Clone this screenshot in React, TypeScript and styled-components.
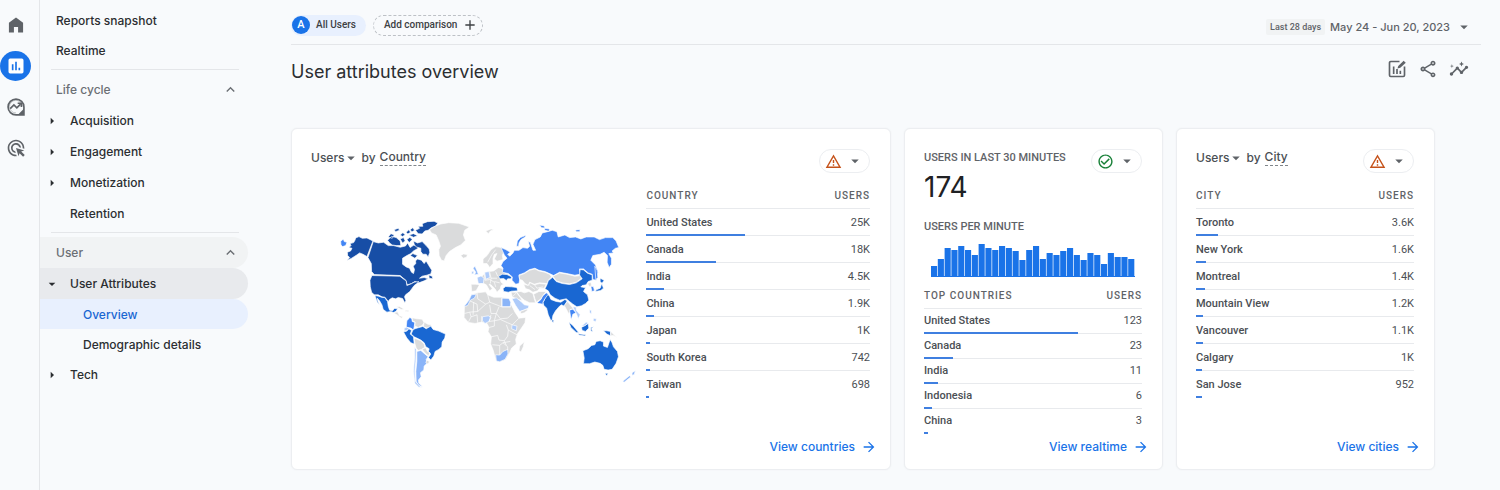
import React from "react";
import styled, { createGlobalStyle } from "styled-components";
import {
  MdAdd,
  MdAdsClick,
  MdArrowDropDown,
  MdArrowForward,
  MdArrowRight,
  MdCheckCircleOutline,
  MdInsights,
  MdKeyboardArrowUp,
  MdOutlineShare,
  MdOutlineWarningAmber,
} from "react-icons/md";

const sans = `Inter, "Liberation Sans", sans-serif`;
const roboto = `Roboto, "Liberation Sans", sans-serif`;

const Global = createGlobalStyle`
  *, *::before, *::after { box-sizing: border-box; }
  body { margin: 0; background: #f8fafc; color: #3c4043; font-family: ${sans}; }
  button, select { font: inherit; color: inherit; background: none; border: 0; padding: 0; margin: 0; cursor: pointer; }
  a { color: inherit; text-decoration: none; }
  h1, h2, p { margin: 0; font-weight: 400; }
  svg { display: block; flex: none; }
`;

/* ---------- shell ---------- */

const Shell = styled.div`
  display: flex;
  min-height: 100vh;
`;

const Rail = styled.nav`
  display: flex;
  flex-direction: column;
  gap: 11px;
  width: 40px;
  flex: none;
  padding-top: 10px;
  border-right: 1px solid #e4e6e9;
`;

const RailLink = styled.a<{ $active?: boolean }>`
  display: grid;
  place-items: center;
  width: 31px;
  height: 30px;
  border-radius: 50%;
  color: ${(p) => (p.$active ? "#fff" : "#5f6368")};
  background: ${(p) => (p.$active ? "#1a73e8" : "transparent")};
`;

const Sidebar = styled.nav`
  width: 208px;
  flex: none;
  padding-top: 5px;
  font-size: 12px;
  font-weight: 500;
`;

const NavDivider = styled.hr`
  height: 1px;
  border: 0;
  margin: 4px 9px 4px 11px;
  background: #e4e6e9;
`;

const NavSection = styled.button<{ $shaded?: boolean }>`
  display: flex;
  align-items: center;
  justify-content: space-between;
  width: 100%;
  height: 31px;
  padding: 0 9px 0 16px;
  border-radius: 0 16px 16px 0;
  color: #6b6f74;
  background: ${(p) => (p.$shaded ? "#f1f3f4" : "transparent")};
`;

const NavGroup = styled.button<{ $open?: boolean }>`
  display: flex;
  align-items: center;
  gap: 10px;
  width: 100%;
  height: 31px;
  padding-left: 4px;
  border-radius: 0 16px 16px 0;
  color: #2b2e31;
  background: ${(p) => (p.$open ? "#e8eaed" : "transparent")};
`;

const NavLeaf = styled.a<{ $level: 0 | 1 | 2; $active?: boolean }>`
  display: flex;
  align-items: center;
  height: 30px;
  padding-left: ${(p) => [16, 30, 43][p.$level]}px;
  border-radius: 0 16px 16px 0;
  color: ${(p) => (p.$active ? "#1967d2" : "#2b2e31")};
  background: ${(p) => (p.$active ? "#e8f0fe" : "transparent")};
`;

const Main = styled.main`
  flex: 1;
  min-width: 0;
  padding: 0 19px 20px 43px;
`;

/* ---------- top bar ---------- */

const TopBar = styled.header`
  display: flex;
  align-items: center;
  justify-content: space-between;
  height: 45px;
  padding-top: 6px;
  border-bottom: 1px solid #e4e6e9;
`;

const Chips = styled.div`
  display: flex;
  gap: 7px;
  font: 500 10px/20px ${roboto};
`;

const UserChip = styled.button`
  display: flex;
  align-items: center;
  gap: 6px;
  height: 21px;
  padding-right: 10px;
  border-radius: 11px;
  background: #e8f0fe;
`;

const Avatar = styled.span`
  width: 18px;
  height: 18px;
  margin-left: 1px;
  border-radius: 50%;
  color: #fff;
  background: #1a73e8;
  font: 500 11px/18px ${roboto};
  text-align: center;
`;

const CompareChip = styled.button`
  display: flex;
  align-items: center;
  gap: 5px;
  height: 21px;
  padding: 0 4px 0 10px;
  border: 1px dashed #bdc1c6;
  border-radius: 11px;
`;

const DateRange = styled.button`
  display: flex;
  align-items: center;
  gap: 5px;
  padding: 3px 8px 0 0;
  color: #5f6368;
  font-size: 11px;
  font-weight: 500;
`;

const DateTag = styled.span`
  padding: 0 4px;
  border-radius: 2px;
  background: #f1f3f4;
  font: 500 9px/16px ${roboto};
`;

const TitleRow = styled.div`
  display: flex;
  align-items: center;
  justify-content: space-between;
  height: 54px;
  padding-right: 12px;
  margin-bottom: 29px;
`;

const Title = styled.h1`
  font-size: 18px;
  line-height: 24px;
  color: #2b2e31;
`;

const Actions = styled.div`
  display: flex;
  gap: 11px;
  padding-bottom: 6px;
  color: #5f6368;
`;

/* ---------- cards ---------- */

const Cards = styled.section`
  display: grid;
  grid-template-columns: 600fr 259fr 259fr;
  gap: 13px;
  padding-right: 46px;
`;

const Card = styled.article`
  display: flex;
  flex-direction: column;
  min-width: 0;
  border: 1px solid #eceef1;
  border-radius: 6px;
  background: #fff;
  box-shadow: 0 0 2px #eef0f2;
`;

const CardHead = styled.header`
  display: flex;
  align-items: flex-start;
  justify-content: space-between;
  height: 42px;
  padding: 20px 20px 0 19px;
`;

const CardTitle = styled.h2`
  display: flex;
  gap: 4px;
  font-size: 12px;
  line-height: 18px;
  font-weight: 500;
  color: #4b4f54;
`;

const Metric = styled.label`
  display: flex;
  align-items: center;
`;

const MetricSelect = styled.select`
  appearance: none;
  field-sizing: content;
  outline: 0;
`;

const Dimension = styled.button`
  height: 17px;
  border-bottom: 1px dashed #80868b;
  line-height: 16px;
`;

const StatusButton = styled.button<{ $tone: "warning" | "good" }>`
  display: flex;
  align-items: center;
  justify-content: space-between;
  width: 51px;
  height: 24px;
  padding: 0 5px;
  border: 1px solid #eceef1;
  border-radius: 12px;
  color: ${(p) => (p.$tone === "warning" ? "#c5521a" : "#188038")};
`;

const Caret = styled(MdArrowDropDown)`
  color: #5f6368;
`;

const MetricCaret = styled(Caret)`
  margin: 0 -2px 0 -3px;
`;

const CardBody = styled.div`
  padding: 0 20px 0 19px;
`;

const MapBody = styled(CardBody)`
  display: grid;
  grid-template-columns: 3fr 2fr;
`;

const MapFrame = styled.div`
  padding: 44px 0 0 24px;
  svg { width: 100%; height: auto; }
`;

const Label = styled.p`
  color: #5f6368;
  font: 500 11px/18px ${roboto};
`;

const BigNumber = styled.p`
  margin: 0 0 15px;
  color: #202124;
  font-size: 28px;
  line-height: 32px;
`;

const MinuteChart = styled.svg`
  width: 100%;
  height: 34px;
  margin: 7px 0;
  padding: 0 7px;
`;

const DataTable = styled.table<{ $top: number }>`
  width: 100%;
  margin-top: ${(p) => p.$top}px;
  border-collapse: separate;
  border-spacing: 0;
  font: 400 11px/14px ${roboto};
  color: #4b4f54;

  th, td {
    padding: 0;
    border-bottom: 1px solid #e8eaed;
    text-align: left;
    white-space: nowrap;
  }
  thead th {
    height: 25px;
    color: #5f6368;
    font-size: 10px;
    font-weight: 500;
    letter-spacing: 1px;
  }
  th:last-child, td:last-child { text-align: right; }
  tbody tr:last-child > * { border-bottom-color: transparent; }
`;

const DataRow = styled.tr<{ $tall: boolean }>`
  position: relative;
  height: ${(p) => (p.$tall ? 27 : 25)}px;
  th { font-weight: 500; }
  th, td { padding-top: ${(p) => (p.$tall ? 2 : 0)}px; }
`;

const Bar = styled.span`
  position: absolute;
  left: 0;
  bottom: 0;
  height: 2px;
  background: #3f7fe0;
`;

const CardFoot = styled.footer`
  display: flex;
  justify-content: flex-end;
  margin-top: auto;
  padding: 3px 13px 12px;
`;

const MoreLink = styled.a`
  display: flex;
  align-items: center;
  gap: 6px;
  color: #1a73e8;
  font-size: 12px;
  line-height: 20px;
  font-weight: 500;
`;

/* ---------- icons ---------- */

const HomeIcon = () => (
  <svg width="20" height="20" viewBox="0 0 24 24" fill="currentColor">
    <path d="M3.500 21V9.200L12 3l8.500 6.200V21h-6v-6.500h-5V21z" />
  </svg>
);

const ReportsIcon = () => (
  <svg width="20" height="20" viewBox="0 0 24 24" fill="currentColor">
    <path
      fillRule="evenodd"
      d="M5 3h14a2 2 0 0 1 2 2v14a2 2 0 0 1-2 2H5a2 2 0 0 1-2-2V5a2 2 0 0 1 2-2zm2 7v7h2v-7zm4-3v10h2V7zm4 7v3h2v-3z"
    />
  </svg>
);

const ExploreIcon = () => (
  <svg width="20" height="20" viewBox="0 0 24 24" fill="none" stroke="currentColor" strokeWidth="2">
    <path d="M21.500 21.500v-9.500a9.500 9.500 0 1 0-9.500 9.500z" />
    <path d="M12 19a7.500 7.500 0 1 1 7.200-8" strokeWidth="1" opacity="0.400" />
    <path d="M5 14l4.500-4.500 3.500 3.500 4.500-4.500" />
    <path d="M14 7.500h4.500V12" />
    <path d="M16.500 20.500l4-4v4z" fill="currentColor" />
  </svg>
);

const EditChartIcon = () => (
  <svg width="20" height="20" viewBox="0 0 24 24" fill="none" stroke="currentColor" strokeWidth="2">
    <path d="M15 3H4.500A1.500 1.500 0 0 0 3 4.500v15A1.500 1.500 0 0 0 4.500 21h15a1.500 1.500 0 0 0 1.500-1.500V9" />
    <path d="M8 9v9M12 12v6M16 14v4" />
    <path d="M12.500 11.500l1-3 6.500-6.500 2.500 2.500-6.500 6z" fill="currentColor" stroke="none" />
  </svg>
);

/* ---------- world map ---------- */

const shades = {
  top: "#174ea6",
  high: "#1967d2",
  mid: "#4285f4",
  low: "#8ab4f8",
  faint: "#aecbfa",
  none: "#dadbdc",
};

type Shade = keyof typeof shades;

const west: [Shade, string][] = [
  ["top", "M62 69L72 65 82 70 96 69 114 78 96 125 84 118 74 114 64 121 50 130 36 137 44 128 38 122 37 112 47 108 51 100 42 98 48 92 45 86 56 83 60 76z"],
  ["mid", "M17 80l8-8 3 8 8 2-4 10-9 3-5-5z"],
  ["top", "M115 80L130 84 146 82 160 92 176 92 196 97 212 93 218 84 226 98 236 91 246 92 250 100 236 108 228 116 216 122 203 130 203 148 214 156 224 160 230 172 236 176 239 164 235 154 243 146 242 138 248 132 260 136 268 146 274 138 282 152 291 166 288 177 276 181 262 184 254 190 268 188 280 192 268 198 252 204 240 200 230 206 217 210 213 196 204 189 196 182 118 179 110 170 109 146 99 128z"],
  ["top", "M282 180l10 4 2 8-11-2z"],
  ["top", "M236 78L248 84 262 80 274 92 283 102 285 112 280 126 274 118 264 118 258 110 258 100 244 96 238 88z"],
  ["top", "M158 76L170 64 184 68 196 78 198 92 184 92 172 90 164 84zM160 66l8-10 10 4-6 10zM178 44l12-4 4 6-12 4zM196 60l8-7 7 6-8 6zM214 52l8-8 5 8-8 5zM196 72l10-4 5 10-8 6zM216 74l9-7 7 7-9 9zM222 60l14-4 12 6-12 5zM226 44l8-6 5 8-8 5zM226 122l8-6 14 6-8 8z"],
  ["top", "M242 46L254 40 250 34 264 34 262 26 278 20 298 19 309 24 302 34 290 38 280 46 270 48 262 57 250 56z"],
  ["top", "M111 182L195 184 205 192 214 198 216 212 229 207 238 202 252 200 246 206 238 212 232 220 225 230 212 240 209 246 213 258 210 264 203 251 190 248 182 252 172 249 164 254 160 260 150 247 141 246 130 240 118 240 110 232 106 216 105 196z"],
  ["high", "M120 242L131 244 142 248 149 248 158 260 160 274 164 286 173 288 178 281 188 281 184 289 176 293 168 290 156 292 145 284 141 270 134 258 127 250 129 260 135 271 127 262z"],
  ["none", "M176 294L188 291 194 303 204 306 199 310 188 301z"],
  ["none", "M184 276l10-1 14 8-9 1zM211 286l12 1-3 4-9-2z"],
  ["none", "M284 44L300 34 318 27 342 23 372 25 404 36 390 46 386 60 392 76 378 90 362 98 344 110 334 122 328 138 320 136 313 122 312 104 317 94 312 78 304 60 290 54z"],
  ["none", "M378 122l8-5 12 2-2 7-10 4z"],
  ["mid", "M216 318L225 308 231 312 232 320 240 323 238 336 236 346 228 340 214 337z"],
  ["none", "M232 309L246 312 262 313 268 324 262 332 250 338 240 334 241 322 233 318z"],
  ["none", "M268 322L278 328 290 331 286 336 276 340 266 336z"],
  ["faint", "M208 340L216 337 222 341 216 348 208 348z"],
  ["high", "M206 352L216 349 222 342 230 347 226 358 236 366 238 388 228 384 216 370z"],
  ["high", "M234 346L240 342 250 339 264 335 274 342 288 334 295 344 312 349 332 358 330 370 322 382 321 396 312 404 301 410 297 424 288 436 281 428 288 418 281 410 283 402 273 396 268 384 258 376 246 370 238 366 229 358z"],
  ["none", "M238 371L246 373 258 378 268 388 270 398 260 404 250 407 244 400 240 386z"],
  ["none", "M262 404L272 399 278 410 285 414 281 424 270 414z"],
  ["low", "M246 410L258 407 268 416 280 426 274 434 277 446 268 454 267 466 257 474 259 486 251 496 252 506 264 516 250 512 244 500 243 470 246 440z"],
  ["faint", "M239 396L244 404 243 440 240 470 242 500 256 516 264 518 252 518 240 506 236 470 239 430z"],
  ["none", "M276 436l8 5-5 7-6-4z"],
];

const east: [Shade, string][] = [
  ["none", "M10 146L10 132 22 122 34 104 48 95 66 98 74 106 68 122 70 134 52 139 44 132 52 116 44 118 40 130 40 146 30 158 22 146z"],
  ["none", "M-6 196L4 188 14 176 26 170 42 168 56 158 68 160 72 172 92 184 62 192 64 202 72 208 64 212 62 222 52 232 46 222 34 210 28 208 38 222 30 228 20 210 8 204z"],
  ["none", "M-26 208L-4 208 -2 212 -11 228 -24 230z"],
  ["low", "M-20 160L-14 154 -8 168 -4 178 -16 180 -12 172z"],
  ["faint", "M-24 170l6-2 0 8-7 2z"],
  ["faint", "M-8 188L4 183 13 190 11 206 -4 207z"],
  ["faint", "M15 172L28 170 31 188 18 193z"],
  ["none", "M18 48L34 42 42 44 32 48 26 56z"],
  ["none", "M-46 276L-34 256 -24 240 -8 234 18 231 24 240 42 247 64 247 88 250 94 268 106 292 118 310 138 308 136 324 124 342 114 356 108 374 110 388 96 400 90 414 78 434 60 442 49 439 41 408 33 388 35 366 25 350 28 338 22 326 6 322 -14 326 -34 323 -47 308z"],
  ["low", "M-48 276L-32 256 -25 240 -10 238 -16 250 -28 256 -36 272z"],
  ["faint", "M8 306L26 303 34 308 28 320 16 326 8 318z"],
  ["low", "M67 250L88 251 93 262 92 276 67 276z"],
  ["faint", "M97 330L112 334 110 348 96 342z"],
  ["low", "M48 420L60 421 70 410 84 404 85 418 76 434 60 441 50 439z"],
  ["none", "M120 394L134 381 131 396 124 412 118 407z"],
  ["mid", "M64 98L78 104 92 112 84 118 90 124 100 114 104 106 118 106 130 98 144 100 150 94 146 80 152 82 160 106 168 106 160 88 166 74 182 66 188 54 204 50 218 46 232 50 236 66 256 60 270 68 288 66 304 72 320 66 344 66 360 74 378 68 400 68 410 78 418 98 408 100 398 108 402 114 388 116 396 130 396 148 389 158 383 142 384 122 374 112 362 118 340 122 334 136 348 150 356 172 350 196 340 194 338 178 326 174 312 162 300 162 302 178 286 181 262 176 240 172 222 182 210 176 196 170 178 166 166 160 150 164 134 174 118 180 120 194 118 206 108 208 97 196 98 186 86 176 68 172 70 160 64 152 70 140 82 130 74 120z"],
  ["mid", "M111 94L113 78 122 68 139 61 137 66 124 74 118 84 117 94zM180 30l14 3 2 6-10-1zM194 40l16 2-2 7-12-3zM288 45l14-1-2 6-10 0z"],
  ["mid", "M346 154l7 12 2 22-6 6z"],
  ["none", "M118 182L134 176 150 166 166 162 178 168 196 172 210 178 216 186 206 196 202 206 180 204 164 208 150 202 146 212 136 206 128 196 120 194z"],
  ["none", "M132 208L146 212 152 204 164 210 180 206 200 208 194 220 180 220 174 228 160 232 148 224 138 222z"],
  ["none", "M220 184L240 174 262 178 286 184 304 182 306 190 290 202 270 207 248 204 230 198z"],
  ["high", "M202 210L206 198 219 187 230 200 248 206 270 209 290 204 308 192 300 180 302 164 312 165 324 175 338 180 338 196 326 200 320 210 308 212 304 216 318 219 312 230 324 240 328 256 318 266 306 273 292 276 280 268 270 260 260 252 240 256 226 250 212 240 206 228 196 222z"],
  ["none", "M324 206l10-4 2 10-6 4z"],
  ["mid", "M334 214l8 2 3 12-8 2z"],
  ["high", "M362 190l12 6-6 9-6-4zM367 206l5 14-8 7-16 3 2-5 12-5z"],
  ["high", "M194 256L202 236 210 244 214 254 230 260 244 262 256 254 263 258 254 274 246 270 240 274 228 288 220 302 218 314 214 318 206 300 201 280 193 272 190 264z"],
  ["mid", "M172 264L184 254 188 244 200 234 206 238 196 252 190 262 190 268 178 266z"],
  ["none", "M162 238L178 230 200 230 190 242 184 252 170 262 166 252z"],
  ["none", "M110 230L124 230 134 234 148 230 160 236 164 252 168 264 150 264 134 256 122 246z"],
  ["high", "M70 221L78 215 96 216 112 218 114 228 96 229 86 232 72 230z"],
  ["high", "M57 184L68 178 82 179 96 186 94 192 84 192 80 197 72 191 60 192z"],
  ["none", "M94 232L110 232 122 248 128 257 114 254 98 246z"],
  ["faint", "M97 252L110 249 124 260 134 270 148 272 146 280 132 286 120 290 108 272z"],
  ["none", "M122 290l18-7 6 2-12 9-10 3z"],
  ["none", "M254 272L264 260 272 270 282 282 272 284 268 298 262 286z"],
  ["mid", "M270 286L280 283 290 294 280 298 276 312 282 320 274 310z"],
  ["faint", "M280 276L290 277 290 286 302 300 296 312 292 300z"],
  ["high", "M268 322L280 332 298 354 290 353 274 338zM306 338L326 326 328 340 318 350 308 347zM296 357l22 3 0 4-20-3zM334 338l8-2-6 6 4 10-6-4zM372 348l10 0 11 2 0 13-11-5z"],
  ["none", "M394 350L412 368 402 362 394 363z"],
  ["faint", "M330 284l6 4 0 10-6-6zM342 310l9 2-2 9-8-3zM306 334l14-12 6 3-10 8z"],
  ["high", "M218 314l5 3-2 6-4-3z"],
  ["high", "M310 408L326 402 336 392 346 390 350 380 362 378 372 382 372 394 384 398 392 374 398 384 402 396 414 410 417 426 410 446 398 464 386 466 374 464 370 452 362 446 346 442 330 447 312 447 314 430z"],
  ["high", "M377 476l9 0-4 8z"],
  ["low", "M458 474l10-6-4 12-6 2zM430 500l20-17 4 4-20 16z"],
];

const africaBorders =
  "M-30 258L-8 268 -6 290M-8 234L-6 252 18 268 30 262 24 240M18 268L-6 290 -30 292M30 262L56 272 66 276 66 250M66 276H94M-46 296L-30 292 -26 306 -34 322M-26 306L-8 300 -6 324M6 304L6 322M34 300L28 320 44 318 50 296 34 296 30 270M50 296L62 312 84 310 98 296M44 318L62 314 84 324 98 330 118 310M28 338L44 334 44 318M50 296L58 276M35 366L54 362 58 376 74 378 84 364 86 346 80 330M38 390L60 392 70 384 92 380M60 392L60 420M70 384L84 396 84 406M86 346L112 360M74 378L80 392M-18 262L-20 300";

const europeBorders =
  "M14 176L16 196M30 172L34 190 52 190M48 170L54 184M34 190L32 206M44 200L60 204M16 196L30 194 44 202 48 216M24 142L36 120 48 104M52 156L68 160M-10 208L8 206M150 212L166 224M164 208L172 220 190 216M140 222L152 230M112 218L124 230M110 234L100 244";

const WorldMap = () => (
  <svg viewBox="0 0 936 540" role="img" aria-label="Users by country on a world map">
    <g stroke="#fff" strokeWidth="2" strokeLinejoin="round">
      {west.map(([shade, d]) => (
        <path key={d} d={d} fill={shades[shade]} />
      ))}
      <g transform="translate(435 0)">
        {east.map(([shade, d]) => (
          <path key={d} d={d} fill={shades[shade]} />
        ))}
        <path d={africaBorders} fill="none" />
        <path d={europeBorders} fill="none" />
      </g>
    </g>
  </svg>
);

/* ---------- data ---------- */

type Entry = { name: string; users: string; share: number };

const countries: Entry[] = [
  { name: "United States", users: "25K", share: 44 },
  { name: "Canada", users: "18K", share: 31 },
  { name: "India", users: "4.5K", share: 8 },
  { name: "China", users: "1.9K", share: 3.3 },
  { name: "Japan", users: "1K", share: 1.8 },
  { name: "South Korea", users: "742", share: 1.4 },
  { name: "Taiwan", users: "698", share: 1.3 },
];

const liveCountries: Entry[] = [
  { name: "United States", users: "123", share: 70.7 },
  { name: "Canada", users: "23", share: 13.2 },
  { name: "India", users: "11", share: 6.3 },
  { name: "Indonesia", users: "6", share: 3.5 },
  { name: "China", users: "3", share: 1.7 },
];

const cities: Entry[] = [
  { name: "Toronto", users: "3.6K", share: 10.2 },
  { name: "New York", users: "1.6K", share: 4.5 },
  { name: "Montreal", users: "1.4K", share: 4 },
  { name: "Mountain View", users: "1.2K", share: 3.4 },
  { name: "Vancouver", users: "1.1K", share: 3.2 },
  { name: "Calgary", users: "1K", share: 2.9 },
  { name: "San Jose", users: "952", share: 2.7 },
];

const perMinute = [
  11, 18, 29, 27, 31, 27, 22, 33, 29, 27, 31, 29, 26, 17, 27, 31, 18, 24, 22, 26, 29, 22, 17, 24, 22, 13, 24, 20, 20, 18,
];

const Ranking = ({ head, rows, top, tall = false }: { head: string; rows: Entry[]; top: number; tall?: boolean }) => (
  <DataTable $top={top}>
    <thead>
      <tr>
        <th scope="col">{head}</th>
        <th scope="col">USERS</th>
      </tr>
    </thead>
    <tbody>
      {rows.map((row) => (
        <DataRow key={row.name} $tall={tall}>
          <th scope="row">
            {row.name}
            <Bar style={{ width: `${row.share}%` }} />
          </th>
          <td>{row.users}</td>
        </DataRow>
      ))}
    </tbody>
  </DataTable>
);

const Status = ({ tone }: { tone: "warning" | "good" }) => (
  <StatusButton $tone={tone} aria-label="Data quality">
    {tone === "warning" ? <MdOutlineWarningAmber size={17} /> : <MdCheckCircleOutline size={17} />}
    <Caret size={18} />
  </StatusButton>
);

const ByTitle = ({ dimension }: { dimension: string }) => (
  <CardTitle>
    <Metric>
      <MetricSelect aria-label="Metric">
        <option>Users</option>
      </MetricSelect>
      <MetricCaret size={18} />
    </Metric>
    <span>by</span>
    <Dimension>{dimension}</Dimension>
  </CardTitle>
);

const More = ({ children }: { children: string }) => (
  <CardFoot>
    <MoreLink href="#">
      {children}
      <MdArrowForward size={16} />
    </MoreLink>
  </CardFoot>
);

export default function App() {
  return (
    <>
      <Global />
      <Shell>
        <Rail aria-label="Products">
          <RailLink href="#" aria-label="Home"><HomeIcon /></RailLink>
          <RailLink href="#" aria-label="Reports" $active><ReportsIcon /></RailLink>
          <RailLink href="#" aria-label="Explore"><ExploreIcon /></RailLink>
          <RailLink href="#" aria-label="Advertising"><MdAdsClick size={20} /></RailLink>
        </Rail>

        <Sidebar aria-label="Reports">
          <NavLeaf href="#" $level={0}>Reports snapshot</NavLeaf>
          <NavLeaf href="#" $level={0}>Realtime</NavLeaf>
          <NavDivider />
          <NavSection>Life cycle<MdKeyboardArrowUp size={17} /></NavSection>
          <NavGroup><MdArrowRight size={16} />Acquisition</NavGroup>
          <NavGroup><MdArrowRight size={16} />Engagement</NavGroup>
          <NavGroup><MdArrowRight size={16} />Monetization</NavGroup>
          <NavLeaf href="#" $level={1}>Retention</NavLeaf>
          <NavDivider />
          <NavSection $shaded>User<MdKeyboardArrowUp size={17} /></NavSection>
          <NavGroup $open><MdArrowDropDown size={16} />User Attributes</NavGroup>
          <NavLeaf href="#" $level={2} $active>Overview</NavLeaf>
          <NavLeaf href="#" $level={2}>Demographic details</NavLeaf>
          <NavGroup><MdArrowRight size={16} />Tech</NavGroup>
        </Sidebar>

        <Main>
          <TopBar>
            <Chips>
              <UserChip><Avatar>A</Avatar>All Users</UserChip>
              <CompareChip>Add comparison<MdAdd size={16} /></CompareChip>
            </Chips>
            <DateRange>
              <DateTag>Last 28 days</DateTag>
              May 24 - Jun 20, 2023
              <MdArrowDropDown size={18} />
            </DateRange>
          </TopBar>

          <TitleRow>
            <Title>User attributes overview</Title>
            <Actions>
              <button aria-label="Customize report"><EditChartIcon /></button>
              <button aria-label="Share"><MdOutlineShare size={20} /></button>
              <button aria-label="Insights"><MdInsights size={20} /></button>
            </Actions>
          </TitleRow>

          <Cards>
            <Card>
              <CardHead>
                <ByTitle dimension="Country" />
                <Status tone="warning" />
              </CardHead>
              <MapBody>
                <MapFrame><WorldMap /></MapFrame>
                <Ranking head="COUNTRY" rows={countries} top={13} tall />
              </MapBody>
              <More>View countries</More>
            </Card>

            <Card>
              <CardHead>
                <Label>USERS IN LAST 30 MINUTES</Label>
                <Status tone="good" />
              </CardHead>
              <CardBody>
                <BigNumber>174</BigNumber>
                <Label>USERS PER MINUTE</Label>
                <MinuteChart viewBox="0 0 300 34" preserveAspectRatio="none" role="img" aria-label="Users per minute">
                  <rect x="0" y="33" width="300" height="1" fill="#1a73e8" />
                  {perMinute.map((v, i) => (
                    <rect key={i} x={i * 10} y={34 - v} width="9" height={v} fill="#1a73e8" />
                  ))}
                </MinuteChart>
                <Ranking head="TOP COUNTRIES" rows={liveCountries} top={0} />
              </CardBody>
              <More>View realtime</More>
            </Card>

            <Card>
              <CardHead>
                <ByTitle dimension="City" />
                <Status tone="warning" />
              </CardHead>
              <CardBody>
                <Ranking head="CITY" rows={cities} top={13} tall />
              </CardBody>
              <More>View cities</More>
            </Card>
          </Cards>
        </Main>
      </Shell>
    </>
  );
}
